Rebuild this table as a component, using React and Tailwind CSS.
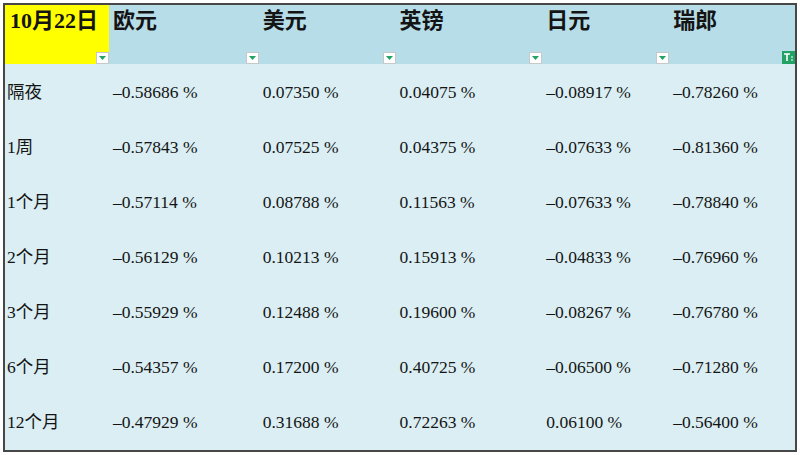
import React from "react";

const cols = [
  { name: "10月22日", w: "w-[104px]" },
  { name: "欧元", w: "w-[150px]" },
  { name: "美元", w: "w-[137px]" },
  { name: "英镑", w: "w-[147px]" },
  { name: "日元", w: "w-[127px]" },
  { name: "瑞郎", w: "w-[126px]" },
];

const rows = [
  ["隔夜", "–0.58686 %", "0.07350 %", "0.04075 %", "–0.08917 %", "–0.78260 %"],
  ["1周", "–0.57843 %", "0.07525 %", "0.04375 %", "–0.07633 %", "–0.81360 %"],
  ["1个月", "–0.57114 %", "0.08788 %", "0.11563 %", "–0.07633 %", "–0.78840 %"],
  ["2个月", "–0.56129 %", "0.10213 %", "0.15913 %", "–0.04833 %", "–0.76960 %"],
  ["3个月", "–0.55929 %", "0.12488 %", "0.19600 %", "–0.08267 %", "–0.76780 %"],
  ["6个月", "–0.54357 %", "0.17200 %", "0.40725 %", "–0.06500 %", "–0.71280 %"],
  ["12个月", "–0.47929 %", "0.31688 %", "0.72263 %", "0.06100 %", "–0.56400 %"],
];

const Dropdown = () => (
  <div className="w-[13px] h-[12px] bg-white border border-[#c8c8c8] flex items-center justify-center">
    <svg width="7" height="5" viewBox="0 0 7 5">
      <path d="M0 0 H7 L3.5 4 Z" fill="#21a366" />
    </svg>
  </div>
);

const FilterOn = () => (
  <div className="w-[13px] h-[13px] bg-[#21a366] flex items-center justify-center">
    <svg width="11" height="9" viewBox="0 0 11 9">
      <path d="M1 1 H7 M4 1 V8" stroke="#fff" strokeWidth="1.6" fill="none" />
      <path d="M8 4 H10 M8 7 H10" stroke="#fff" strokeWidth="1" fill="none" />
    </svg>
  </div>
);

export default function App() {
  return (
    <div className="w-[800px] h-[455px] bg-white pt-[3px] pl-[3px]">
      <div
        className="w-[794px] h-[449px] border-2 border-[#474747] bg-[#daeef3] text-[#141414] flex flex-col"
        style={{ fontFamily: '"Liberation Serif", "Noto Sans CJK SC", serif' }}
      >
        {/* header */}
        <div className="flex h-[59px] bg-[#b7dde8]">
          {cols.map((c, i) => (
            <div
              key={c.name}
              className={`${c.w} h-full flex flex-col justify-between ${
                i === 0 ? "bg-[#ffff00] pl-[5px]" : "pl-[4px]"
              }`}
            >
              <p
                className={`text-[22px] leading-[26px] pt-[3px] ${
                  i === 0 ? "font-bold" : "font-semibold"
                }`}
              >
                {c.name}
              </p>
              <div className="flex justify-end">
                {i === cols.length - 1 ? <FilterOn /> : <Dropdown />}
              </div>
            </div>
          ))}
        </div>
        {/* body */}
        <div className="flex-1 flex flex-col">
          {rows.map((r) => (
            <div key={r[0]} className="flex-1 flex items-center">
              {r.map((cell, j) => (
                <div
                  key={j}
                  className={`${cols[j].w} ${j === 0 ? "pl-[2px]" : "pl-[4px]"} text-[17.5px] leading-[20px]`}
                >
                  {cell}
                </div>
              ))}
            </div>
          ))}
        </div>
      </div>
    </div>
  );
}
